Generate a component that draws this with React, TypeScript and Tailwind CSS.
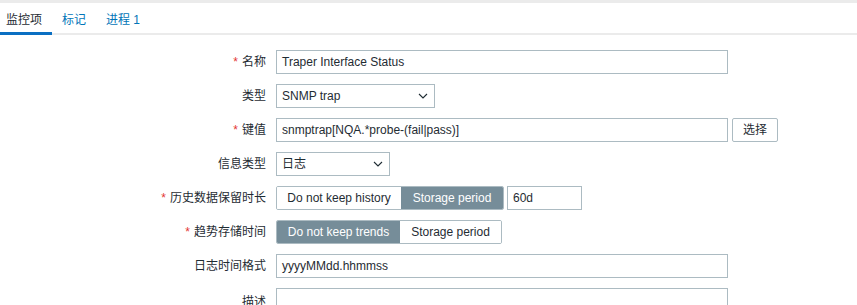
import React from 'react';

const font = { fontFamily: '"Liberation Sans", Arial, "Noto Sans CJK SC", sans-serif' };

const Label = ({ text, required }: { text: string; required?: boolean }) => (
  <div className="w-[266px] shrink-0 text-right text-[12px] text-[#1f2c33]">
    {required && <span className="mr-[4px] text-[#e33734]">*</span>}
    {text}
  </div>
);

const Chevron = () => (
  <svg width="10" height="6" viewBox="0 0 10 6" className="text-[#1f2c33]">
    <path d="M1 1l4 4 4-4" fill="none" stroke="currentColor" strokeWidth="1.1" />
  </svg>
);

const Select = ({ value, width }: { value: string; width: string }) => (
  <div className={`${width} flex h-[24px] items-center justify-between border border-[#acbbc2] bg-white pl-[5px] pr-[6px] text-[12px] text-[#1f2c33]`}>
    <span>{value}</span>
    <Chevron />
  </div>
);

const Input = ({ value, width }: { value: string; width: string }) => (
  <div className={`${width} flex h-[24px] items-center border border-[#acbbc2] bg-white px-[5px] text-[12px] text-[#1f2c33]`}>
    {value}
  </div>
);

const Segmented = ({ options, active, widths }: { options: [string, string]; active: number; widths: [string, string] }) => (
  <div className="flex h-[24px] overflow-hidden rounded-[2px] border border-[#acbbc2] text-[12px]">
    {options.map((o, i) => (
      <div
        key={o}
        className={`flex items-center justify-center ${widths[i]} ${
          i === active ? 'bg-[#768d99] text-white' : 'bg-white text-[#1f2c33]'
        }`}
      >
        {o}
      </div>
    ))}
  </div>
);

const Row = ({ children, label, required }: { children: React.ReactNode; label: string; required?: boolean }) => (
  <div className="flex h-[24px] items-center gap-[10px]">
    <Label text={label} required={required} />
    {children}
  </div>
);

export default function App() {
  return (
    <div className="h-[305px] w-[857px] overflow-hidden bg-white" style={font}>
      <div className="h-[3px] bg-[#ebebeb]" />
      <div className="flex h-[32px] items-end border-b-[2px] border-[#ebebeb] text-[12px]">
        <div className="-mb-[2px] flex h-[31px] w-[52px] items-center border-b-[3px] border-[#0a6fc2] pl-[6px] pt-[3px] text-[#1f2c33]">
          监控项
        </div>
        <div className="flex h-[29px] items-center px-[10px] pt-[3px] text-[#0275b8]">标记</div>
        <div className="flex h-[29px] items-center px-[10px] pt-[3px] text-[#0275b8]">进程 1</div>
      </div>
      <div className="flex flex-col gap-[10px] pt-[15px]">
        <Row label="名称" required>
          <Input value="Traper Interface Status" width="w-[452px]" />
        </Row>
        <Row label="类型">
          <Select value="SNMP trap" width="w-[159px]" />
        </Row>
        <Row label="键值" required>
          <div className="flex gap-[4px]">
            <Input value="snmptrap[NQA.*probe-(fail|pass)]" width="w-[452px]" />
            <div className="flex h-[24px] w-[46px] items-center justify-center rounded-[2px] border border-[#acbbc2] bg-white text-[12px] text-[#1f2c33]">
              选择
            </div>
          </div>
        </Row>
        <Row label="信息类型">
          <Select value="日志" width="w-[114px]" />
        </Row>
        <Row label="历史数据保留时长" required>
          <div className="flex gap-[3px]">
            <Segmented options={['Do not keep history', 'Storage period']} active={1} widths={['w-[124px]', 'w-[102px]']} />
            <Input value="60d" width="w-[75px]" />
          </div>
        </Row>
        <Row label="趋势存储时间" required>
          <Segmented options={['Do not keep trends', 'Storage period']} active={0} widths={['w-[123px]', 'w-[101px]']} />
        </Row>
        <Row label="日志时间格式">
          <Input value="yyyyMMdd.hhmmss" width="w-[452px]" />
        </Row>
        <div className="flex gap-[10px]">
          <div className="w-[266px] shrink-0 pt-[5px] text-right text-[12px] text-[#1f2c33]">描述</div>
          <div className="h-[60px] w-[452px] border border-[#acbbc2] bg-white" />
        </div>
      </div>
    </div>
  );
}
